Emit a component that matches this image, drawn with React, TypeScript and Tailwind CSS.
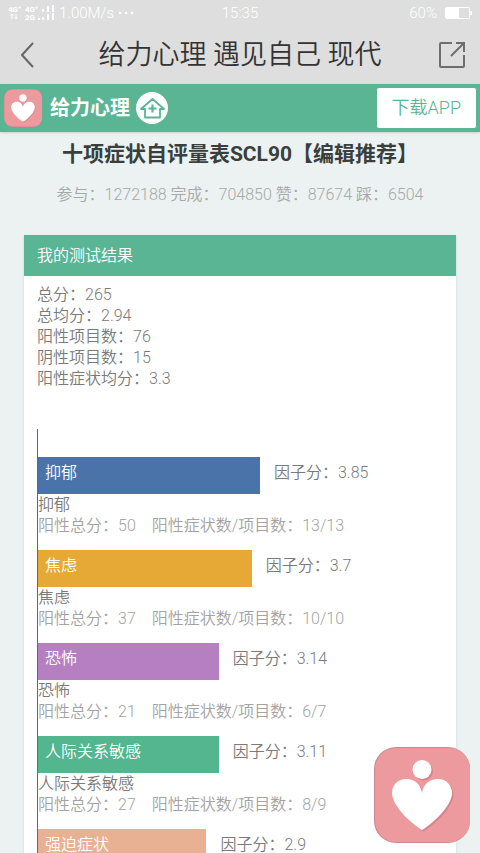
import { clsx } from "clsx";

const summary = [
    { label: "总分", value: "265" },
    { label: "总均分", value: "2.94" },
    { label: "阳性项目数", value: "76" },
    { label: "阴性项目数", value: "15" },
    { label: "阳性症状均分", value: "3.3" },
];

const factors = [
    { name: "抑郁", score: "3.85", width: 54.8, total: 50, items: "13/13", color: "bg-[#4a74a9]" },
    { name: "焦虑", score: "3.7", width: 52.8, total: 37, items: "10/10", color: "bg-[#e6a935]" },
    { name: "恐怖", score: "3.14", width: 44.6, total: 21, items: "6/7", color: "bg-[#b57fc2]" },
    { name: "人际关系敏感", score: "3.11", width: 44.6, total: 27, items: "8/9", color: "bg-[#53b68f]" },
    { name: "强迫症状", score: "2.9", width: 41.6, color: "bg-[#e8b193]" },
];

function HeartLogo({ className }: { className?: string }) {
    return (
        <svg viewBox="0 0 96 96" className={className} aria-hidden="true">
            <rect width="96" height="96" rx="22" fill="#c9898d" />
            <rect x="1" y="1" width="95" height="94" rx="21" fill="#ed9a9f" />
            <g fill="#d5858b" transform="translate(1.5 1.5)">
                <circle cx="48" cy="22.500" r="9.500" />
                <path d="M48 83C35 75 18 58 18 46c0-8 6-14 14-14 9 0 15 6 16 14 1-8 7-14 16-14 8 0 14 6 14 14 0 12-17 29-30 37z" />
            </g>
            <g fill="#fff">
                <circle cx="48" cy="22.500" r="9.500" />
                <path d="M48 83C35 75 18 58 18 46c0-8 6-14 14-14 9 0 15 6 16 14 1-8 7-14 16-14 8 0 14 6 14 14 0 12-17 29-30 37z" />
            </g>
        </svg>
    );
}

function StatusBar() {
    return (
        <div className="grid h-[26px] grid-cols-3 items-center px-2 text-[15px] font-light text-white">
            <div className="flex items-center gap-1">
                <svg viewBox="0 0 47 16" className="h-4 w-[47px] shrink-0" fill="#fff" aria-hidden="true">
                    <g fontSize="8" fontWeight="700" fontFamily="Roboto, sans-serif">
                        <text x="0" y="7">4G⁺</text>
                        <text x="17" y="7">4G⁺</text>
                        <text x="17" y="15">2G</text>
                    </g>
                    <path d="M4 9v5M2.500 10.500L4 9l1.500 1.500M8 9v5M6.500 12.500L8 14l1.500-1.500" fill="none" stroke="#fff" />
                    <path d="M34 4h2v3h-2zM39 1h2v6h-2zM44 0h2v7h-2zM30 13h2v2h-2zM34 12h2v3h-2zM39 9h2v6h-2zM44 8h2v7h-2z" />
                </svg>
                <span>1.00M/s</span>
                <svg viewBox="0 0 16 4" className="h-1 w-4 shrink-0" fill="#fff" aria-hidden="true">
                    <circle cx="2" cy="2" r="1.300" />
                    <circle cx="8" cy="2" r="1.300" />
                    <circle cx="14" cy="2" r="1.300" />
                </svg>
            </div>
            <span className="text-center">15:35</span>
            <div className="flex items-center justify-end gap-2">
                <span>60%</span>
                <svg viewBox="0 0 27 12" className="h-3 w-[27px]" aria-hidden="true">
                    <rect x="0.500" y="0.500" width="24" height="11" rx="1" fill="none" stroke="#fff" />
                    <path d="M1 1h13v10H1zM25 4h2v4h-2z" fill="#fff" />
                </svg>
            </div>
        </div>
    );
}

function TitleBar() {
    return (
        <div className="flex h-[58px] items-center justify-between px-3">
            <button type="button" aria-label="返回" className="flex size-8 items-center justify-center">
                <svg viewBox="0 0 14 26" className="h-[26px] w-3.5" fill="none" stroke="#666" strokeWidth="2" aria-hidden="true">
                    <path d="M12 1L1 13l11 12" />
                </svg>
            </button>
            <p className="text-[27px] font-[350] text-[#333]">给力心理 遇见自己 现代</p>
            <button type="button" aria-label="分享" className="flex size-8 items-center justify-center">
                <svg viewBox="0 0 28 28" className="size-7" fill="none" stroke="#6e6e6e" strokeWidth="2" aria-hidden="true">
                    <path d="M14 2H3q-1 0-1 1v22q0 1 1 1h22q1 0 1-1V14M18 2h8v9M26 2L13 15" />
                </svg>
            </button>
        </div>
    );
}

function BrandBar() {
    return (
        <div className="flex h-12 items-center bg-[#5ab595] px-1 shadow-sm">
            <HeartLogo className="size-[38px]" />
            <span className="ml-2 text-xl font-bold text-white">给力心理</span>
            <a href="#home" aria-label="首页" className="ml-1.5">
                <svg viewBox="0 0 32 32" className="size-8" aria-hidden="true">
                    <circle cx="16" cy="16" r="16" fill="#fff" />
                    <g fill="none" stroke="#5ab595" strokeWidth="1.800" strokeLinejoin="round">
                        <path d="M16.500 7L5 17h4v8.500h15V17h4z" />
                        <path d="M16.500 12.500v8M12.500 16.500h8" strokeWidth="2.200" />
                    </g>
                </svg>
            </a>
            <a href="#download" className="ml-auto flex h-10 items-center rounded-xs bg-white px-[15px] text-lg font-[350] text-[#5ab595]">
                下载APP
            </a>
        </div>
    );
}

function Factor({ factor }: { factor: (typeof factors)[number] }) {
    return (
        <li className="mb-3.5">
            <div className="flex">
                <div className={clsx("h-[37px] shrink-0 px-[7px] leading-8 text-white", factor.color)} style={{ width: `${factor.width}%` }}>
                    {factor.name}
                </div>
                <span className="ml-3.5 leading-8">因子分：{factor.score}</span>
            </div>
            {factor.items && (
                <>
                    <p>{factor.name}</p>
                    <p className="flex gap-4 text-[#a3a3a3]">
                        <span>阳性总分：{factor.total}</span>
                        <span>阳性症状数/项目数：{factor.items}</span>
                    </p>
                </>
            )}
        </li>
    );
}

export default function App() {
    return (
        <div className="relative flex h-screen flex-col overflow-hidden bg-[#ebf2f1] font-[Roboto,'Noto_Sans_CJK_SC',sans-serif]">
            <header className="shrink-0 bg-[#dedede]">
                <StatusBar />
                <TitleBar />
                <BrandBar />
            </header>

            <main className="min-h-0 flex-1 overflow-hidden px-6">
                <h1 className="mt-2 text-center text-[21px] leading-7 font-bold text-[#3a3f3d]">十项症状自评量表SCL90【编辑推荐】</h1>
                <p className="mt-[15px] text-center leading-6 font-[350] text-[#a5a9a8]">
                    参与：1272188 完成：704850 赞：87674 踩：6504
                </p>

                <section className="mt-7 bg-white font-[350] text-[#7a7a7a] shadow">
                    <h2 className="bg-[#5ab595] px-[13px] leading-[41px] text-white">我的测试结果</h2>
                    <div className="px-[13px] pt-2 leading-[21px]">
                        {summary.map((item) => (
                            <p key={item.label}>{item.label}：{item.value}</p>
                        ))}
                        <ul className="mt-10 border-l border-[#666] pt-7">
                            {factors.map((factor) => (
                                <Factor key={factor.name} factor={factor} />
                            ))}
                        </ul>
                    </div>
                </section>
            </main>

            <button type="button" aria-label="给力心理" className="absolute right-2.5 bottom-2.5">
                <HeartLogo className="size-24" />
            </button>
        </div>
    );
}
